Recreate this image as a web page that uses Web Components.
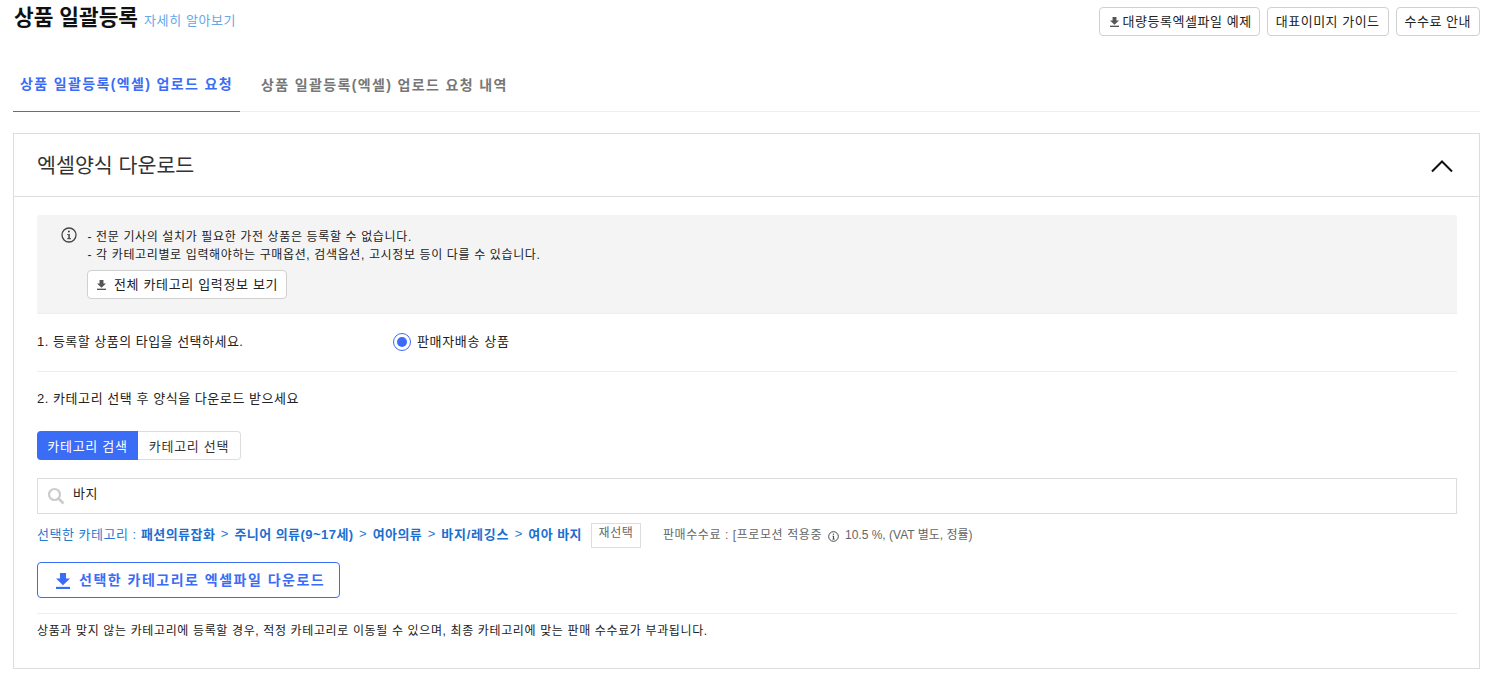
<!DOCTYPE html>
<html lang="ko"><head><meta charset="utf-8"><title>상품 일괄등록</title>
<style>
html,body{margin:0;padding:0;background:#fff}
body{font-family:"Liberation Sans","Noto Sans CJK KR",sans-serif;color:#222;font-size:12px}
</style></head><body>
<upload-page></upload-page>
<script>
const DL='<svg viewBox="1.4 1 9.2 10.4" width="100%" height="100%" preserveAspectRatio="none" style="display:block"><path d="M4 1h4v3.6h2.6L6 9 1.4 4.6H4z" fill="currentColor"/><rect x="1.4" y="10" width="9.2" height="1.4" fill="currentColor"/></svg>';
const INFO=(s,w=1.3)=>`<svg viewBox="0 0 16 16" width="${s}" height="${s}"><circle cx="8" cy="8" r="7" fill="none" stroke="#444" stroke-width="${w}"/><rect x="7.3" y="7" width="1.5" height="5" fill="#444"/><rect x="6.2" y="7" width="1.4" height="1" fill="#444"/><rect x="6.2" y="11.2" width="3.8" height="1" fill="#444"/><circle cx="7.9" cy="4.6" r="1" fill="#444"/></svg>`;
function def(name,css,html){
  customElements.define(name,class extends HTMLElement{
    constructor(){super();const r=this.attachShadow({mode:'open'});r.innerHTML='<style>'+css+'</style>'+html;}
  });
}
def('ui-button',`
:host{display:inline-flex;align-items:center;box-sizing:border-box;height:29px;padding:0 8px 2px;border:1px solid #d0d0d0;border-radius:4px;background:#fff;font-size:13px;letter-spacing:.5px;color:#222;white-space:nowrap}
.i{width:9px;height:10px;margin-right:var(--icon-gap,3px);color:#555;margin-top:3px}
:host([icon]) .i{display:block}
:host(:not([icon])) .i{display:none}
`,`<span class="i">${DL}</span><slot></slot>`);
def('page-header',`
:host{display:flex;justify-content:space-between;align-items:flex-start;padding-top:7px;height:28px}
.l{display:flex;align-items:baseline;gap:6px;margin:-3px 0 0 1px}
h1{margin:0;font-size:21.4px;line-height:28px;font-weight:700;color:#111}
a{font-size:13px;letter-spacing:.6px;color:#66a8e6;text-decoration:none}
.r{display:flex;gap:7px}
.first{padding:0 7px 2px 10px;letter-spacing:.56px}
`,`<div class="l"><h1>상품 일괄등록</h1><a>자세히 알아보기</a></div>
<div class="r"><ui-button class="first" icon>대량등록엑셀파일 예제</ui-button><ui-button>대표이미지 가이드</ui-button><ui-button>수수료 안내</ui-button></div>`);
def('tab-bar',`
:host{display:flex;margin-top:30px;border-bottom:1px solid #eee;height:46px}
.t{box-sizing:border-box;height:47px;padding:0 7px;font-size:14px;font-weight:700;line-height:38px;color:#777;white-space:nowrap;letter-spacing:1.36px}
.t.a{color:#3b6cf6;border-bottom:1px solid #3b6cf6;width:227px;margin-right:14px}
.t+.t{padding-top:1px}
`,`<div class="t a">상품 일괄등록(엑셀) 업로드 요청</div><div class="t">상품 일괄등록(엑셀) 업로드 요청 내역</div>`);
def('collapse-card',`
:host{display:block;margin-top:21px;border:1px solid #ddd;height:536px;box-sizing:border-box}
header{display:flex;align-items:center;justify-content:space-between;height:63px;box-sizing:border-box;padding:0 25px 0 23px;border-bottom:1px solid #ddd;font-size:20.6px;color:#333}
header span{margin-bottom:2px}
svg{display:block}
.b{padding:18px 22px 0 23px}
`,`<header><span>엑셀양식 다운로드</span><svg width="24" height="16" viewBox="0 0 24 16"><path d="M2 14.5 12 4.5 22 14.5" fill="none" stroke="#111" stroke-width="2"/></svg></header><div class="b"><slot></slot></div>`);
def('info-box',`
:host{display:flex;box-sizing:border-box;height:99px;padding:13px 0 0 24px;background:#f4f4f4;border-radius:3px 3px 0 0;border-bottom:1px solid #eee;font-size:12px;letter-spacing:.63px;color:#222}
.ic{width:16px;height:16px;margin-right:10px;flex:none;margin-top:-1px}
p{margin:0;line-height:18px;padding-left:.5px}
ui-button{margin-top:6px;padding:0 8px 3px 9px;--icon-gap:8px;letter-spacing:.65px}
`,`<div class="ic">${INFO(16)}</div><div><p>- 전문 기사의 설치가 필요한 가전 상품은 등록할 수 없습니다.</p><p>- 각 카테고리별로 입력해야하는 구매옵션, 검색옵션, 고시정보 등이 다를 수 있습니다.</p><ui-button icon>전체 카테고리 입력정보 보기</ui-button></div>`);
def('type-row',`
:host{display:flex;align-items:center;height:58px;box-sizing:border-box;border-bottom:1px solid #eee;padding-bottom:5px;font-size:13px;letter-spacing:.48px;color:#222}
.s{width:356px}
.r{box-sizing:border-box;width:18px;height:18px;border-radius:50%;border:1.5px solid #3b6cf6;display:flex;align-items:center;justify-content:center;margin-right:6px;margin-top:3px}
.r i{width:10px;height:10px;border-radius:50%;background:#3b6cf6}
`,`<span class="s">1. 등록할 상품의 타입을 선택하세요.</span><span class="r"><i></i></span><span style="letter-spacing:.66px">판매자배송 상품</span>`);
def('segment-tabs',`
:host{display:inline-flex;height:29px;box-sizing:border-box;font-size:13px;letter-spacing:.7px;border-radius:4px}
span{display:flex;align-items:center;box-sizing:border-box;height:29px;padding-bottom:1px}
.a{width:101px;justify-content:center;background:#3b6cf6;color:#fff;border-radius:4px 0 0 4px}
.b{width:103px;justify-content:center;border:1px solid #ddd;border-left:0;border-radius:0 4px 4px 0;color:#333}
`,`<span class="a">카테고리 검색</span><span class="b">카테고리 선택</span>`);
def('search-box',`
:host{display:flex;align-items:center;box-sizing:border-box;height:36px;border:1px solid #ddd;padding:0 0 0 9px;font-size:13px;letter-spacing:.5px;color:#222}
svg{margin-right:8px;flex:none}
span{margin-top:-7px}
`,`<svg width="18" height="18" viewBox="0 0 18 18"><circle cx="7.5" cy="7.5" r="5.5" fill="none" stroke="#ccc" stroke-width="2.2"/><path d="M11.5 11.5 16.5 16.5" stroke="#ccc" stroke-width="2.6"/></svg><span>바지</span>`);
def('category-line',`
:host{display:flex;align-items:center;height:24px;margin-top:7px;font-size:13px;letter-spacing:.45px;color:#2a7bd0;white-space:nowrap}
b{font-weight:700;color:#1c6fd0}
.lead{letter-spacing:.52px}
.sep{margin:0 5.5px;font-weight:400}
.w{letter-spacing:.75px}
.re{display:inline-flex;align-items:center;justify-content:center;box-sizing:border-box;width:50px;height:25px;border:1px solid #ddd;color:#666;font-size:12px;letter-spacing:.6px;margin:4px 22px 0 9px;padding-bottom:7px}
.fee{color:#666;display:flex;align-items:center;font-size:12px;letter-spacing:.58px}
.fee svg{margin:7px 6px 0 6px}
.fee span{letter-spacing:0}
`,`<span class="lead">선택한 카테고리 :&nbsp;</span><b>패션의류잡화</b><span class="sep">&gt;</span><b>주니어 의류(9~17세)</b><span class="sep">&gt;</span><b>여아의류</b><span class="sep">&gt;</span><b class="w">바지/레깅스</b><span class="sep">&gt;</span><b>여아 바지</b><span class="re">재선택</span><div class="fee">판매수수료 : [프로모션 적용중 ${INFO(11,1.4)}<span>10.5 %, (VAT 별도, 정률)</span></div>`);
def('download-button',`
:host{display:inline-flex;align-items:center;box-sizing:border-box;width:303px;height:36px;border:1px solid #3b6cf6;border-radius:4px;padding:0 0 3px 18px;color:#3b6cf6;font-size:14px;font-weight:700;letter-spacing:1.5px;background:#fff;white-space:nowrap}
.i{width:14px;height:16px;margin:4px 9px 0 0}
`,`<span class="i">${DL}</span><span>선택한 카테고리로 엑셀파일 다운로드</span>`);
def('upload-page',`
:host{display:block;padding:0 13px;font-family:"Liberation Sans","Noto Sans CJK KR",sans-serif}
.s2{margin-top:18px;height:20px;line-height:18px;font-size:13px;letter-spacing:.55px;color:#222}
.seg{height:29px;margin-top:21px}
search-box{margin-top:18px}
.dl{margin-top:17px;height:36px}
.note{margin-top:15px;border-top:1px solid #eee;padding-top:8px;line-height:18px;font-size:12px;letter-spacing:.635px;color:#222}
`,`<page-header></page-header><tab-bar></tab-bar><collapse-card><info-box></info-box><type-row></type-row><div class="s2">2. 카테고리 선택 후 양식을 다운로드 받으세요</div><div class="seg"><segment-tabs></segment-tabs></div><search-box></search-box><category-line></category-line><div class="dl"><download-button></download-button></div><div class="note">상품과 맞지 않는 카테고리에 등록할 경우, 적정 카테고리로 이동될 수 있으며, 최종 카테고리에 맞는 판매 수수료가 부과됩니다.</div></collapse-card>`);
</script></body></html>
